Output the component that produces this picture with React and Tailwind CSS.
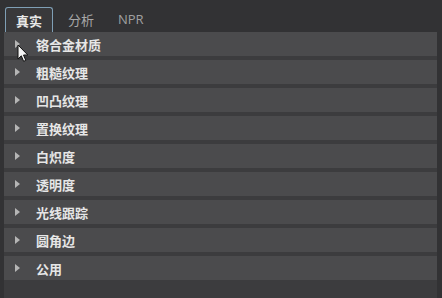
import React from "react";

const rows = ["铬合金材质", "粗糙纹理", "凹凸纹理", "置换纹理", "白炽度", "透明度", "光线跟踪", "圆角边", "公用"];

export default function App() {
  return (
    <div
      className="relative w-[442px] h-[298px] bg-[#323234] overflow-hidden"
      style={{ fontFamily: '"Noto Sans CJK SC", "Noto Sans", sans-serif' }}
    >
      <div className="flex items-end h-[32px] pl-[5px]">
        <div className="w-[48px] h-[25px] rounded-t-[3px] border-t border-x border-[#7f9fb5] border-b-0 bg-[#39393b] flex items-center justify-center text-[13px] font-bold text-[#e8e8e8] leading-none">
          真实
        </div>
        <div className="ml-[15px] h-[25px] flex items-center text-[13px] text-[#a8a8a8] leading-none">
          分析
        </div>
        <div
          className="ml-[24px] h-[25px] flex items-center text-[13px] text-[#a0a0a0] leading-none"
          style={{ fontFamily: '"Open Sans", sans-serif' }}
        >
          NPR
        </div>
      </div>
      <div className="mx-[4px] w-[433px] h-[266px] bg-[#3c3c3e] flex flex-col gap-[4px]">
        {rows.map((r) => (
          <div key={r} className="h-[24px] shrink-0 bg-[#4b4b4d] flex items-center">
            <svg width="6" height="8" viewBox="0 0 6 8" className="ml-[11px]">
              <path d="M0 0 L5 4 L0 8 Z" fill="#b5b5b5" />
            </svg>
            <span className="ml-[15px] text-[13px] font-bold text-[#e6e6e6] leading-none">{r}</span>
          </div>
        ))}
      </div>
      <svg className="absolute left-[17px] top-[44px]" width="13" height="19" viewBox="0 0 13 19">
        <path d="M1 1 L1 15 L4.3 11.8 L6.6 17.3 L8.8 16.4 L6.5 11 L10.8 11 Z" fill="#f5f5f5" stroke="#111" strokeWidth="1" strokeLinejoin="round" />
      </svg>
    </div>
  );
}
